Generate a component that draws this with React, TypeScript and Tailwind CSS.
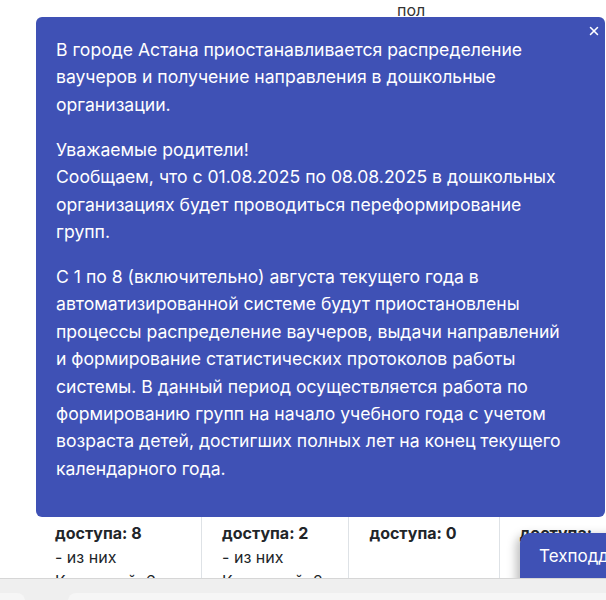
import { X } from "lucide-react";

const paragraphs = [
  "В городе Астана приостанавливается распределение ваучеров и получение направления в дошкольные организации.",
  "Уважаемые родители!\nСообщаем, что с 01.08.2025 по 08.08.2025 в дошкольных организациях будет проводиться переформирование групп.",
  "С 1 по 8 (включительно) августа текущего года в автоматизированной системе будут приостановлены процессы распределение ваучеров, выдачи направлений и формирование статистических протоколов работы системы. В данный период осуществляется работа по формированию групп на начало учебного года с учетом возраста детей, достигших полных лет на конец текущего календарного года.",
];

const cells = [
  { w: "w-[177px]", value: "8", kz: "6" },
  { w: "w-[156px]", value: "2", kz: "2" },
  { w: "w-[159px]", value: "0", kz: "" },
  { w: "flex-1", value: "5", kz: "3" },
];

export default function App() {
  return (
    <div
      className="relative h-[600px] w-[606px] overflow-hidden bg-white text-[#212529]"
      style={{ fontFamily: "Inter, 'Noto Sans', sans-serif" }}
    >
      {/* Table behind the notice */}
      <div className="h-[17px] overflow-hidden pl-[397px] text-[16px] leading-[21px] text-[#333]">пол</div>

      <div className="mt-[500px] flex pl-[35px]">
        {cells.map((c, i) => (
          <div
            key={i}
            className={`${c.w} h-[80px] border-[#dee2e6] pl-5 pt-[4px] text-[16px] leading-[24px] ${i < 3 ? "border-r" : ""}`}
          >
            <div className="font-bold">доступа: {c.value}</div>
            {c.kz && (
              <>
                <div>- из них</div>
                <div>Казахский: {c.kz}</div>
              </>
            )}
          </div>
        ))}
      </div>

      {/* Notice */}
      <div className="absolute left-[36px] top-[17px] h-[500px] w-[569px] rounded-[6px] bg-[#3f51b5] pl-5 pt-[19px] text-white">
        <button className="absolute right-[4px] top-[7px] text-white">
          <X className="h-[14px] w-[14px]" strokeWidth={2.6} />
        </button>
        <div className="w-[512px] text-[17.6px] leading-[27.4px]">
          {paragraphs.map((p, i) => (
            <p key={i} className="mb-[17.6px] whitespace-pre-line last:mb-0">
              {p}
            </p>
          ))}
        </div>
      </div>

      {/* Support button */}
      <div className="absolute left-[520px] top-[533px] h-[60px] w-[160px] rounded-tl-[10px] bg-[#3f51b5] pl-[19px] pt-[11px] text-[17px] text-white shadow-[-4px_2px_10px_rgba(0,0,0,0.25)]">
        Техподдержка
      </div>

      {/* Browser toolbar */}
      <div className="absolute bottom-0 left-0 right-0 h-[22px] border-t border-[#d6d6d6] bg-[#efefef]">
        <div className="mt-[14px] flex gap-[43px]">
          <div className="h-[10px] w-[25px] rounded-tr-[8px] bg-[#f6f6f6]" />
          <div className="h-[10px] flex-1 rounded-tl-[8px] bg-[#f6f6f6]" />
        </div>
      </div>
    </div>
  );
}
